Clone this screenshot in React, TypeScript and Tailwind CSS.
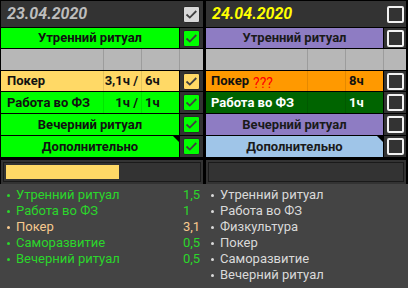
import React from "react";

function Checked({ bg }: { bg: string }) {
  return (
    <div className={`w-[17px] h-[17px] rounded-[2px] border border-[#2a2a2a] flex items-center justify-center ${bg}`}>
      <svg width="15" height="15" viewBox="0 0 15 15">
        <path d="M2.5 7.5 L5.8 10.6 L12.3 4" fill="none" stroke="#404040" strokeWidth="1.8" />
      </svg>
    </div>
  );
}

function Unchecked() {
  return <div className="w-[17px] h-[17px] rounded-[2px] border-2 border-[#f2f2f2] bg-[#333]" />;
}

function Corner() {
  return (
    <div className="absolute top-0 right-0 w-0 h-0 border-t-[6px] border-l-[6px] border-t-black border-l-transparent" />
  );
}

function GrayRow({ name, cb }: { name: string; cb: string }) {
  return (
    <div className="h-[21px] flex bg-[#b7b7b7]">
      <div className={name} />
      <div className="w-[38px] border-l border-[#9c9c9c]" />
      <div className="w-[38px] border-l border-[#9c9c9c]" />
      <div className={cb} />
    </div>
  );
}

export default function App() {
  return (
    <div className="w-[408px] h-[288px] bg-[#444] flex flex-col font-['Roboto',sans-serif] overflow-hidden">
      <div className="bg-black flex pl-px pr-[2px] pt-px gap-[3px]">
        {/* Left column */}
        <div className="w-[202px] flex flex-col gap-px">
          <div className="h-[26px] bg-[#333] flex items-center">
            <div className="flex-1 pl-[6px] italic font-bold text-[16px] text-[#bdbdbd]">23.04.2020</div>
            <div className="w-[23px] flex justify-center">
              <Checked bg="bg-[#d9d9d9]" />
            </div>
          </div>
          <div className="h-[20px] flex gap-px">
            <div className="flex-1 bg-[#00ff00] flex items-center justify-center font-bold text-[13px] text-[#111]">Утренний ритуал</div>
            <div className="w-[23px] bg-[#333] flex items-center justify-center">
              <Checked bg="bg-[#00ff00]" />
            </div>
          </div>
          <GrayRow name="w-[102px]" cb="w-[24px] border-l border-[#9c9c9c]" />
          <div className="h-[20px] flex gap-px">
            <div className="flex-1 bg-[#ffd966] flex items-stretch font-bold text-[13px] text-[#111]">
              <div className="w-[102px] pl-[6px] flex items-center">Покер</div>
              <div className="w-[38px] border-l border-black/10 flex items-center justify-end pr-[3px]">3,1ч /</div>
              <div className="flex-1 border-l border-black/10 flex items-center pl-[3px]">6ч</div>
            </div>
            <div className="w-[23px] bg-[#333] flex items-center justify-center">
              <Checked bg="bg-[#ffd966]" />
            </div>
          </div>
          <div className="h-[21px] flex gap-px">
            <div className="flex-1 bg-[#00ff00] flex items-stretch font-bold text-[13px] text-[#111]">
              <div className="w-[102px] pl-[6px] flex items-center">Работа во ФЗ</div>
              <div className="w-[38px] border-l border-black/10 flex items-center justify-end pr-[3px]">1ч /</div>
              <div className="flex-1 border-l border-black/10 flex items-center pl-[3px]">1ч</div>
            </div>
            <div className="w-[23px] bg-[#333] flex items-center justify-center">
              <Checked bg="bg-[#00ff00]" />
            </div>
          </div>
          <div className="h-[21px] flex gap-px">
            <div className="flex-1 bg-[#00ff00] flex items-center justify-center font-bold text-[13px] text-[#111]">Вечерний ритуал</div>
            <div className="w-[23px] bg-[#333] flex items-center justify-center">
              <Checked bg="bg-[#00ff00]" />
            </div>
          </div>
          <div className="h-[21px] flex gap-px">
            <div className="relative flex-1 bg-[#00ff00] flex items-center justify-center font-bold text-[13px] text-[#111]">
              Дополнительно
              <Corner />
            </div>
            <div className="w-[23px] bg-[#333] flex items-center justify-center">
              <Checked bg="bg-[#00ff00]" />
            </div>
          </div>
          <div className="mt-[2px] h-[24px] bg-[#333] p-[2px]">
            <div className="h-full border border-[#1a1a1a] p-[2px]">
              <div className="w-[113px] h-full bg-[#ffd966]" />
            </div>
          </div>
        </div>

        {/* Right column */}
        <div className="w-[200px] flex flex-col gap-px">
          <div className="h-[26px] bg-[#333] flex items-center">
            <div className="flex-1 pl-[6px] italic font-bold text-[16px] text-[#ffff00]">24.04.2020</div>
            <div className="w-[22px] flex justify-center">
              <Unchecked />
            </div>
          </div>
          <div className="h-[20px] flex gap-px">
            <div className="flex-1 bg-[#8e7cc3] flex items-center justify-center font-bold text-[13px] text-[#1a1a1a]">Утренний ритуал</div>
            <div className="w-[22px] bg-[#333] flex items-center justify-center">
              <Unchecked />
            </div>
          </div>
          <GrayRow name="w-[101px]" cb="w-[23px] border-l border-[#9c9c9c]" />
          <div className="h-[20px] flex gap-px">
            <div className="flex-1 bg-[#ff9900] flex items-stretch font-bold text-[13px] text-[#111]">
              <div className="w-[101px] pl-[5px] flex items-center whitespace-nowrap">
                Покер<span className="ml-[4px] font-normal text-[14px] text-[#ff0000] align-[-2px] translate-y-[2px]">???</span>
              </div>
              <div className="w-[38px] border-l border-black/10" />
              <div className="flex-1 border-l border-black/10 flex items-center pl-[3px]">8ч</div>
            </div>
            <div className="w-[22px] bg-[#333] flex items-center justify-center">
              <Unchecked />
            </div>
          </div>
          <div className="h-[21px] flex gap-px">
            <div className="flex-1 bg-[#006400] flex items-stretch font-bold text-[13px] text-white">
              <div className="w-[101px] pl-[5px] flex items-center">Работа во ФЗ</div>
              <div className="w-[38px] border-l border-black/10" />
              <div className="flex-1 border-l border-black/10 flex items-center pl-[3px]">1ч</div>
            </div>
            <div className="w-[22px] bg-[#333] flex items-center justify-center">
              <Unchecked />
            </div>
          </div>
          <div className="h-[21px] flex gap-px">
            <div className="flex-1 bg-[#8e7cc3] flex items-center justify-center font-bold text-[13px] text-[#1a1a1a]">Вечерний ритуал</div>
            <div className="w-[22px] bg-[#333] flex items-center justify-center">
              <Unchecked />
            </div>
          </div>
          <div className="h-[21px] flex gap-px">
            <div className="relative flex-1 bg-[#9fc5e8] flex items-center justify-center font-bold text-[13px] text-[#1a1a1a]">
              Дополнительно
              <Corner />
            </div>
            <div className="w-[22px] bg-[#333] flex items-center justify-center">
              <Unchecked />
            </div>
          </div>
          <div className="mt-[2px] h-[24px] bg-[#333] p-[2px]">
            <div className="h-full border border-[#1a1a1a]" />
          </div>
        </div>
      </div>

      {/* Bottom lists */}
      <div className="flex pt-[3px] text-[13px]">
        <div className="w-[204px] flex flex-col">
          {[
            ["Утренний ритуал", "1,5", "text-[#2bd62b]"],
            ["Работа во ФЗ", "1", "text-[#2bd62b]"],
            ["Покер", "3,1", "text-[#f7c98e]"],
            ["Саморазвитие", "0,5", "text-[#2bd62b]"],
            ["Вечерний ритуал", "0,5", "text-[#2bd62b]"],
          ].map(([n, v, c]) => (
            <div key={n} className={`h-[16px] flex items-center ${c}`}>
              <div className="w-[16px] pl-[7px]">
                <div className="w-[3px] h-[3px] rounded-full bg-current" />
              </div>
              <div className="w-[167px] leading-[16px]">{n}</div>
              <div className="leading-[16px]">{v}</div>
            </div>
          ))}
        </div>
        <div className="w-[204px] flex flex-col text-[#d9d9d9]">
          {["Утренний ритуал", "Работа во ФЗ", "Физкультура", "Покер", "Саморазвитие", "Вечерний ритуал"].map((n) => (
            <div key={n} className="h-[16px] flex items-center">
              <div className="w-[16px] pl-[7px]">
                <div className="w-[3px] h-[3px] rounded-full bg-current" />
              </div>
              <div className="leading-[16px]">{n}</div>
            </div>
          ))}
        </div>
      </div>
    </div>
  );
}
